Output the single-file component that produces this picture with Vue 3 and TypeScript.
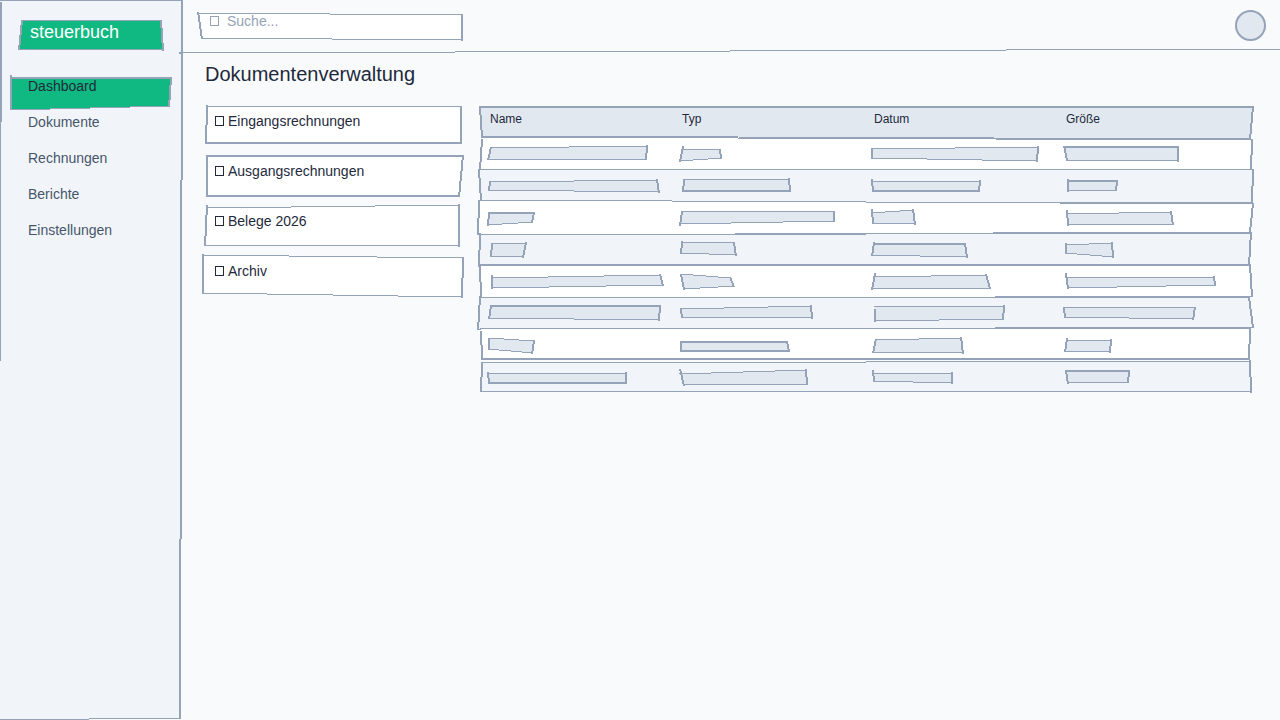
<script setup lang="ts">
import { defineComponent, h, type PropType } from 'vue'

type Side = [x1: number, y1: number, x2: number, y2: number]
type Rule = [y1: number, y2: number, weight: 1 | 2]

interface Shape {
  l?: Side
  r?: Side
  t?: Rule
  b?: Rule
}

interface Frame {
  box: [x: number, y: number, w: number, h: number]
  shape: Shape
  fill: string
}

const INK = '#94a3b8'

// Nearly upright pen line, drawn as short vertical runs with half-length ends.
function sidePath([x1, y1, x2, y2]: Side): string {
  const n = Math.abs(x2 - x1)
  const dir = Math.sign(x2 - x1)
  let d = ''
  for (let i = 0; i <= n; i++) {
    const from = n ? Math.max(0, (i - 0.5) / n) : 0
    const to = n ? Math.min(1, (i + 0.5) / n) : 1
    d += `M${x1 + dir * i} ${Math.round(y1 + (y2 - y1) * from)}V${Math.round(y1 + (y2 - y1) * to)}`
  }
  return d
}

interface Run {
  from: number
  to: number
  y: number
}

// Nearly level pen line, split into equal horizontal runs.
function ruleRuns([y1, y2]: Rule, x1: number, x2: number): Run[] {
  const n = Math.abs(y2 - y1)
  const dir = Math.sign(y2 - y1)
  return Array.from({ length: n + 1 }, (_, i) => ({
    from: Math.round(x1 + ((x2 - x1) * i) / (n + 1)),
    to: Math.round(x1 + ((x2 - x1) * (i + 1)) / (n + 1)),
    y: y1 + dir * i,
  }))
}

function rulePath(rule: Rule, x1: number, x2: number): string {
  const shift = rule[2] === 1 ? 0.5 : 0
  return ruleRuns(rule, x1, x2)
    .map((run) => `M${run.from} ${run.y + shift}H${run.to}`)
    .join('')
}

const Sketch = defineComponent({
  props: { frame: { type: Object as PropType<Frame>, required: true } },
  setup(props) {
    return () => {
      const { box, shape, fill } = props.frame
      const left = shape.l ?? [box[0], 0, box[0], 0]
      const right = shape.r ?? [box[0] + box[2], 0, box[0] + box[2], 0]
      const thin: string[] = []
      const thick: string[] = []
      if (shape.l) thick.push(sidePath(shape.l))
      if (shape.r) thick.push(sidePath(shape.r))
      if (shape.t) (shape.t[2] === 1 ? thin : thick).push(rulePath(shape.t, left[0] - 1, right[0] + 1))
      if (shape.b) (shape.b[2] === 1 ? thin : thick).push(rulePath(shape.b, left[2] - 1, right[2] + 1))
      const pen = (d: string, width: number) =>
        h('path', { d, fill: 'none', stroke: INK, 'stroke-width': width, 'vector-effect': 'non-scaling-stroke' })
      let area = ''
      if (shape.t && shape.b) {
        const top = ruleRuns(shape.t, left[0], right[0]).flatMap((run) => [
          `${run.from},${run.y}`,
          `${run.to},${run.y}`,
        ])
        const bottom = ruleRuns(shape.b, left[2], right[2])
          .flatMap((run) => [`${run.from},${run.y}`, `${run.to},${run.y}`])
          .reverse()
        area = [...top, ...bottom].join(' ')
      }
      return h(
        'svg',
        {
          class: 'sketch',
          viewBox: box.join(' '),
          preserveAspectRatio: 'none',
          'shape-rendering': 'crispEdges',
          'aria-hidden': 'true',
        },
        [area ? h('polygon', { points: area, fill }) : null, pen(thick.join(''), 2), pen(thin.join(''), 1)],
      )
    }
  },
})

function shape(l: Side, r: Side, t: Rule, b: Rule): Shape {
  return { l, r, t, b }
}

const sidebarFrame: Frame = {
  box: [0, 0, 180, 720],
  fill: '#f1f5f9',
  shape: shape([1, 2, -2, 720], [182, 0, 180, 718], [0, 0, 1], [719, 718, 1]),
}
const logoFrame: Frame = {
  box: [20, 20, 142, 30],
  fill: '#10b981',
  shape: shape([22, 20, 19, 50], [161, 20, 163, 51], [20, 20, 1], [49, 49, 1]),
}
const activeFrame: Frame = {
  box: [10, 78, 160, 32],
  fill: '#10b981',
  shape: shape([11, 75, 11, 110], [171, 77, 169, 107], [78, 78, 2], [109, 106, 1]),
}
const topbarFrame: Frame = {
  box: [180, 0, 1100, 52],
  fill: 'none',
  shape: { l: [180, 52, 180, 54], b: [52, 49, 1] },
}
const searchFrame: Frame = {
  box: [200, 12, 262, 28],
  fill: '#ffffff',
  shape: shape([198, 12, 202, 39], [462, 14, 462, 41], [13, 14, 1], [38, 39, 1]),
}

const navItems = ['Dashboard', 'Dokumente', 'Rechnungen', 'Berichte', 'Einstellungen']
const active = 'Dashboard'

const folders = [
  { name: 'Eingangsrechnungen', shape: shape([207, 105, 206, 144], [461, 106, 461, 144], [106, 106, 1], [143, 143, 2]) },
  { name: 'Ausgangsrechnungen', shape: shape([207, 155, 207, 197], [463, 155, 459, 197], [156, 156, 2], [196, 196, 2]) },
  { name: 'Belege 2026', shape: shape([207, 205, 205, 246], [459, 204, 459, 247], [207, 205, 1], [245, 245, 1]) },
  { name: 'Archiv', shape: shape([203, 254, 203, 294], [463, 257, 462, 298], [255, 257, 1], [293, 296, 1]) },
].map((f, i) => ({
  name: f.name,
  frame: { box: [205, 106 + i * 50, 256, 40], fill: '#ffffff', shape: f.shape } as Frame,
}))

const columns = ['Name', 'Typ', 'Datum', 'Größe']

const headFrame: Frame = {
  box: [480, 106, 768, 32],
  fill: '#e2e8f0',
  shape: shape([480, 107, 482, 137], [1253, 106, 1250, 139], [107, 107, 2], [136, 138, 1]),
}

const rowShapes: Shape[] = [
  shape([482, 139, 480, 170], [1252, 139, 1251, 170], [137, 139, 1], [169, 169, 1]),
  shape([479, 170, 481, 200], [1253, 169, 1252, 203], [169, 169, 1], [202, 202, 1]),
  shape([479, 200, 478, 235], [1253, 203, 1250, 232], [200, 203, 1], [234, 232, 1]),
  shape([480, 233, 479, 267], [1251, 232, 1249, 265], [234, 233, 1], [265, 265, 2]),
  shape([480, 265, 481, 298], [1250, 265, 1252, 297], [265, 265, 2], [298, 296, 1]),
  shape([480, 296, 478, 330], [1249, 297, 1253, 328], [297, 297, 1], [329, 327, 1]),
  shape([481, 331, 482, 359], [1250, 328, 1249, 360], [328, 328, 1], [359, 359, 2]),
  shape([482, 362, 481, 392], [1250, 360, 1251, 393], [362, 361, 1], [391, 391, 1]),
]

const barShapes: Shape[][] = [
  [
    shape([491, 147, 488, 160], [647, 145, 646, 160], [147, 146, 1], [159, 159, 1]),
    shape([683, 146, 680, 162], [720, 149, 721, 159], [149, 149, 1], [160, 158, 1]),
    shape([872, 148, 872, 159], [1038, 146, 1037, 162], [148, 147, 1], [158, 160, 1]),
    shape([1064, 146, 1067, 160], [1178, 146, 1178, 162], [147, 147, 2], [160, 160, 1]),
  ],
  [
    shape([490, 181, 489, 191], [657, 179, 659, 193], [181, 180, 1], [190, 191, 1]),
    shape([684, 179, 683, 192], [789, 178, 790, 192], [179, 179, 1], [191, 191, 2]),
    shape([872, 179, 873, 192], [980, 180, 979, 192], [181, 181, 1], [191, 191, 2]),
    shape([1068, 179, 1068, 192], [1117, 180, 1116, 191], [181, 181, 2], [190, 190, 1]),
  ],
  [
    shape([489, 212, 488, 226], [534, 212, 532, 223], [213, 213, 2], [224, 222, 1]),
    shape([682, 211, 680, 226], [834, 211, 834, 222], [211, 211, 1], [223, 221, 1]),
    shape([872, 209, 873, 224], [913, 209, 915, 225], [212, 210, 1], [223, 223, 1]),
    shape([1067, 210, 1068, 226], [1171, 211, 1173, 225], [213, 212, 1], [224, 224, 1]),
  ],
  [
    shape([492, 243, 491, 257], [526, 242, 523, 258], [243, 243, 1], [256, 256, 1]),
    shape([682, 241, 681, 254], [734, 242, 736, 256], [242, 242, 1], [253, 254, 1]),
    shape([874, 242, 872, 256], [965, 243, 967, 258], [244, 244, 2], [255, 256, 1]),
    shape([1066, 243, 1066, 254], [1112, 242, 1113, 258], [244, 243, 1], [253, 256, 1]),
  ],
  [
    shape([492, 275, 492, 289], [660, 274, 663, 286], [277, 275, 1], [287, 285, 1]),
    shape([681, 274, 684, 290], [730, 277, 734, 287], [274, 277, 1], [288, 286, 1]),
    shape([875, 273, 872, 290], [986, 274, 990, 289], [276, 275, 1], [288, 288, 1]),
    shape([1066, 273, 1068, 289], [1214, 276, 1215, 286], [277, 277, 1], [287, 285, 1]),
  ],
  [
    shape([491, 305, 489, 319], [660, 305, 659, 321], [306, 306, 2], [318, 319, 1]),
    shape([681, 309, 682, 318], [811, 305, 812, 319], [308, 306, 1], [317, 317, 1]),
    shape([875, 309, 875, 322], [1004, 305, 1003, 320], [306, 306, 1], [320, 319, 1]),
    shape([1064, 307, 1065, 318], [1195, 307, 1193, 320], [307, 307, 1], [317, 318, 1]),
  ],
  [
    shape([489, 338, 489, 350], [534, 340, 532, 354], [338, 340, 1], [349, 352, 1]),
    shape([681, 341, 681, 352], [787, 341, 789, 352], [342, 342, 2], [351, 351, 2]),
    shape([876, 339, 873, 353], [961, 337, 963, 354], [339, 338, 1], [352, 352, 1]),
    shape([1067, 338, 1065, 352], [1111, 339, 1110, 353], [340, 340, 1], [351, 351, 1]),
  ],
  [
    shape([488, 372, 489, 383], [626, 372, 626, 384], [373, 373, 1], [383, 383, 2]),
    shape([680, 369, 684, 386], [806, 369, 807, 385], [373, 370, 1], [384, 384, 1]),
    shape([873, 370, 874, 382], [952, 372, 952, 384], [373, 373, 1], [381, 382, 1]),
    shape([1066, 371, 1068, 384], [1129, 370, 1128, 383], [371, 371, 2], [382, 382, 1]),
  ],
]

const rows = rowShapes.map((rowShape, i) => {
  const y = 138 + i * 32
  return {
    frame: { box: [480, y, 768, 32], fill: i % 2 ? '#f1f5f9' : '#ffffff', shape: rowShape } as Frame,
    bars: barShapes[i].map(
      (bar, c) => ({ box: [480 + c * 192, y, 192, 32], fill: '#e2e8f0', shape: bar }) as Frame,
    ),
  }
})
</script>

<template>
  <div class="app">
    <aside class="sidebar">
      <Sketch :frame="sidebarFrame" />
      <a class="logo" href="#">
        <Sketch :frame="logoFrame" />
        <span>steuerbuch</span>
      </a>
      <nav class="nav">
        <a v-for="item in navItems" :key="item" href="#" class="nav-item" :class="{ active: item === active }">
          <Sketch v-if="item === active" :frame="activeFrame" />
          <span>{{ item }}</span>
        </a>
      </nav>
    </aside>

    <div class="main">
      <header class="topbar">
        <Sketch :frame="topbarFrame" />
        <label class="search">
          <Sketch :frame="searchFrame" />
          <svg class="glyph" viewBox="0 0 9 10" shape-rendering="crispEdges" aria-hidden="true">
            <path d="M0.5 0.5H8.5V9.5H0.5Z" fill="none" stroke="currentColor" />
          </svg>
          <input type="text" placeholder="Suche..." aria-label="Suche" />
        </label>
        <button class="avatar" type="button" aria-label="Profil"></button>
      </header>

      <main class="content">
        <h1>Dokumentenverwaltung</h1>
        <div class="columns">
          <div class="folders">
            <a v-for="f in folders" :key="f.name" class="folder" href="#">
              <Sketch :frame="f.frame" />
              <svg class="glyph" viewBox="0 0 9 10" shape-rendering="crispEdges" aria-hidden="true">
                <path d="M0.5 0.5H8.5V9.5H0.5Z" fill="none" stroke="currentColor" />
              </svg>
              <span>{{ f.name }}</span>
            </a>
          </div>
          <table class="files">
            <thead>
              <tr>
                <th v-for="(c, i) in columns" :key="c" scope="col">
                  <Sketch v-if="i === 0" :frame="headFrame" />
                  {{ c }}
                </th>
              </tr>
            </thead>
            <tbody>
              <tr v-for="(row, r) in rows" :key="r">
                <td v-for="(bar, c) in row.bars" :key="c">
                  <Sketch v-if="c === 0" :frame="row.frame" />
                  <Sketch class="bar" :frame="bar" />
                </td>
              </tr>
            </tbody>
          </table>
        </div>
      </main>
    </div>
  </div>
</template>

<style>
body {
  background: #f8fafc;
}
</style>

<style scoped>
.app {
  display: flex;
  min-height: 100vh;
  overflow: clip;
  background: #f8fafc;
  color: #1e293b;
  font-family: "Liberation Sans", Arial, sans-serif;
  font-size: 14px;
  line-height: 16px;
}

a {
  color: inherit;
  text-decoration: none;
}

.sketch {
  position: absolute;
  inset: 0;
  z-index: -1;
  display: block;
  width: 100%;
  height: 100%;
  overflow: visible;
  pointer-events: none;
}

.sidebar {
  position: relative;
  isolation: isolate;
  flex: none;
  box-sizing: border-box;
  width: 180px;
  padding: 20px 10px;
}

.logo {
  position: relative;
  isolation: isolate;
  display: block;
  box-sizing: border-box;
  height: 30px;
  margin: 0 8px 28px 10px;
  padding: 2px 10px;
  color: #ffffff;
  font-size: 18px;
  line-height: 20px;
}

.nav {
  display: flex;
  flex-direction: column;
  gap: 4px;
}

.nav-item {
  position: relative;
  isolation: isolate;
  box-sizing: border-box;
  height: 32px;
  padding-left: 18px;
  color: #475569;
}

.nav-item.active {
  color: #1e293b;
}

.main {
  flex: 1;
  min-width: 0;
}

.topbar {
  position: relative;
  isolation: isolate;
  display: flex;
  align-items: center;
  justify-content: space-between;
  box-sizing: border-box;
  height: 52px;
  padding: 0 14px 0 20px;
}

.search {
  position: relative;
  isolation: isolate;
  display: flex;
  align-items: flex-start;
  gap: 8px;
  box-sizing: border-box;
  width: 262px;
  height: 28px;
  padding: 1px 10px;
  color: #94a3b8;
}

.search input {
  flex: 1;
  min-width: 0;
  height: 16px;
  padding: 0;
  border: 0;
  outline: 0;
  background: transparent;
  color: #1e293b;
  font: inherit;
}

.search input::placeholder {
  color: #94a3b8;
  opacity: 1;
}

.glyph {
  flex: none;
  display: block;
  width: 9px;
  height: 10px;
  margin-top: 3px;
}

.avatar {
  box-sizing: border-box;
  width: 31px;
  height: 31px;
  margin-bottom: 1px;
  padding: 0;
  border: 2px solid #94a3b8;
  border-radius: 50%;
  background: #e2e8f0;
}

.content {
  padding: 10px 32px 24px 25px;
}

h1 {
  margin: 0 0 20px;
  font-size: 20px;
  font-weight: 400;
  line-height: 24px;
}

.columns {
  display: grid;
  grid-template-columns: 256px minmax(0, 1fr);
  gap: 19px;
  align-items: start;
}

.folders {
  display: flex;
  flex-direction: column;
  gap: 10px;
}

.folder {
  position: relative;
  isolation: isolate;
  display: flex;
  align-items: flex-start;
  gap: 4px;
  box-sizing: border-box;
  height: 40px;
  padding: 7px 10px;
}

.files {
  isolation: isolate;
  width: 100%;
  table-layout: fixed;
  border-collapse: collapse;
}

.files tr {
  position: relative;
  height: 32px;
}

.files th {
  box-sizing: border-box;
  height: 32px;
  padding: 6px 10px;
  font-size: 12px;
  font-weight: 400;
  line-height: 14px;
  text-align: left;
  vertical-align: top;
}

.files td {
  padding: 0;
}

.bar {
  position: static;
  height: 32px;
}
</style>
